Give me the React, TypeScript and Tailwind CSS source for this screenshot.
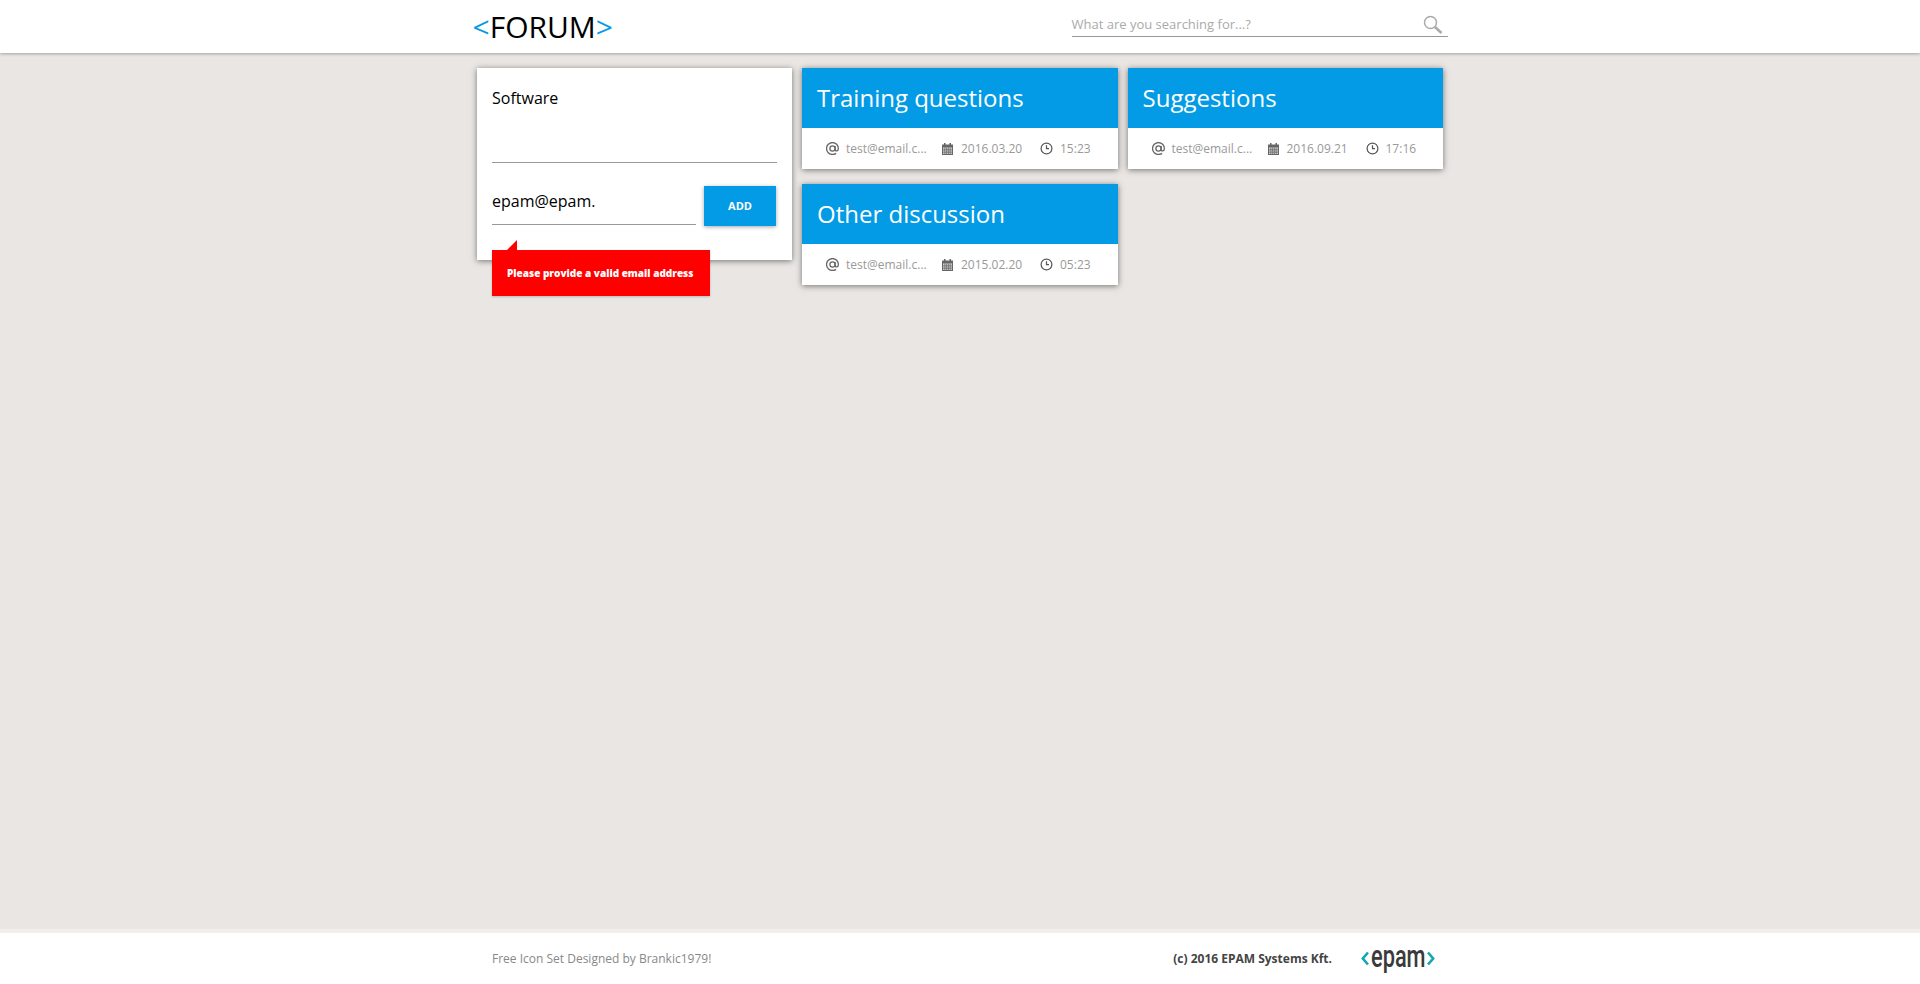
function AtIcon() {
  return (
    <svg width="13" height="13" viewBox="0.5 0.5 12 12" fill="none" stroke="#666" strokeWidth="1.2" className="shrink-0">
      <circle cx="6.5" cy="6.5" r="2.4" />
      <path d="M8.9 4.2v3.4c0 1.6 3 1.6 3-1.1C11.900 3.500 9.500 1 6.500 1S1 3.500 1 6.500 3.500 12 6.500 12c1.300 0 2.300-.3 3.300-1" />
    </svg>
  );
}

function CalendarIcon() {
  return (
    <svg width="11" height="12" viewBox="0 0 11 12" className="shrink-0">
      <path d="M0 1.500h11V12H0z" fill="#666" />
      <path d="M2 0h1.500v2.500H2zM7.500 0H9v2.500H7.500z" fill="#666" />
      <path d="M1 4.500h9V11H1z" fill="#ddd" />
      <path d="M1 6.300h9M1 8h9M1 9.700h9M2.800 4.500V11M4.600 4.500V11M6.400 4.500V11M8.200 4.500V11" stroke="#666" strokeWidth=".7" />
    </svg>
  );
}

function ClockIcon() {
  return (
    <svg width="13" height="13" viewBox="0 0 13 13" fill="none" stroke="#555" strokeWidth="1.200" className="shrink-0">
      <circle cx="6.500" cy="6.500" r="5.400" />
      <path d="M6.500 3.300v3.400h2.500" />
    </svg>
  );
}

function SearchIcon() {
  return (
    <svg width="20" height="19" viewBox="0 0 20 19" fill="none" className="shrink-0">
      <circle cx="7.500" cy="7.500" r="6" stroke="#aaa" strokeWidth="1.500" />
      <path d="M12 12l6.500 6" stroke="#aaa" strokeWidth="2.600" />
    </svg>
  );
}

function EpamLogo() {
  return (
    <div className="flex items-center gap-[2px] w-[74px]">
      <svg width="8" height="15" viewBox="0 0 8 15" fill="none" stroke="#12a5b5" strokeWidth="2.600" className="shrink-0">
        <path d="M7 1.500L1.800 7.500 7 13.500" />
      </svg>
      <span className="block w-[54px] text-[32px] leading-none font-medium text-[#3a3a3a] font-['Roboto',sans-serif] scale-x-[.68] origin-left pb-[5px] whitespace-nowrap">
        epam
      </span>
      <svg width="8" height="15" viewBox="0 0 8 15" fill="none" stroke="#12a5b5" strokeWidth="2.600" className="shrink-0">
        <path d="M1 1.500l5.200 6L1 13.500" />
      </svg>
    </div>
  );
}

interface TopicCardProps {
  title: string;
  date: string;
  time: string;
}

function TopicCard({ title, date, time }: TopicCardProps) {
  return (
    <div className="h-[101px] bg-white shadow-[0_1px_6px_rgba(0,0,0,0.5)]">
      <div className="h-[60px] bg-[#039be5] pl-[15px] flex items-center">
        <h2 className="text-[24px] text-white leading-none">{title}</h2>
      </div>
      <div className="h-[41px] pl-[24px] flex items-center text-[12px] text-[#999]">
        <AtIcon />
        <span className="ml-[7px] w-[96px]">test@email.c...</span>
        <CalendarIcon />
        <span className="ml-[8px] w-[79px]">{date}</span>
        <ClockIcon />
        <span className="ml-[7px]">{time}</span>
      </div>
    </div>
  );
}

export default function App() {
  return (
    <div className="h-screen flex flex-col bg-[#e9e6e3] font-['Open_Sans',sans-serif]">
      <header className="h-[53px] shrink-0 bg-white shadow-[0_1px_3px_rgba(0,0,0,0.3)]">
        <div className="w-[975px] h-full mx-auto flex items-center justify-between">
          <div className="text-[30px] leading-none text-black">
            <span className="text-[#039be5]">&lt;</span>FORUM<span className="text-[#039be5]">&gt;</span>
          </div>
          <div className="w-[376px] h-[24px] -mt-[3px] border-b border-[#999] flex items-center justify-between pr-[5px]">
            <span className="text-[13px] text-[#aaa]">What are you searching for...?</span>
            <SearchIcon />
          </div>
        </div>
      </header>

      <main className="flex-1 pt-[15px]">
        <div className="w-[966px] mx-auto grid grid-cols-[315px_315.5px_315px] gap-x-[10px] gap-y-[15px]">
          <div className="relative row-span-2 h-[192px] bg-white shadow-[0_1px_6px_rgba(0,0,0,0.5)] px-[15px]">
            <div className="h-[95px] border-b border-[#999] pt-[19px] text-[16px] leading-[22px] text-black">Software</div>
            <div className="flex mt-[23px] gap-[8px] items-start">
              <div className="w-[204px] h-[39px] border-b border-[#999] pt-[4px] text-[16px] leading-[22px] text-black">
                epam@epam.
              </div>
              <button className="w-[72px] h-[40px] bg-[#039be5] text-white text-[11px] font-bold shadow-[0_1px_4px_rgba(0,0,0,0.35)]">
                ADD
              </button>
            </div>
            <div className="absolute left-[15px] top-[182px] w-[218px] h-[46px] bg-[#ff0000] flex items-center pl-[15px] pt-[1px] text-[10px] font-extrabold text-white whitespace-nowrap shadow-[0_1px_2px_rgba(0,0,0,0.2)]">
              Please provide a valid email address
              <div className="absolute left-[15px] top-[-10px] w-0 h-0 border-l-[10px] border-l-transparent border-b-[10px] border-b-[#ff0000]" />
            </div>
          </div>
          <TopicCard title="Training questions" date="2016.03.20" time="15:23" />
          <TopicCard title="Suggestions" date="2016.09.21" time="17:16" />
          <TopicCard title="Other discussion" date="2015.02.20" time="05:23" />
        </div>
      </main>

      <footer className="h-[55px] shrink-0 border-t-4 border-[#f0efed] bg-white">
        <div className="w-[966px] h-full mx-auto pl-[15px] pr-[8px] flex items-center justify-between">
          <span className="text-[12px] text-[#888]">Free Icon Set Designed by Brankic1979!</span>
          <div className="flex items-center gap-[29px]">
            <span className="text-[12px] font-bold text-[#444]">(c) 2016 EPAM Systems Kft.</span>
            <EpamLogo />
          </div>
        </div>
      </footer>
    </div>
  );
}
